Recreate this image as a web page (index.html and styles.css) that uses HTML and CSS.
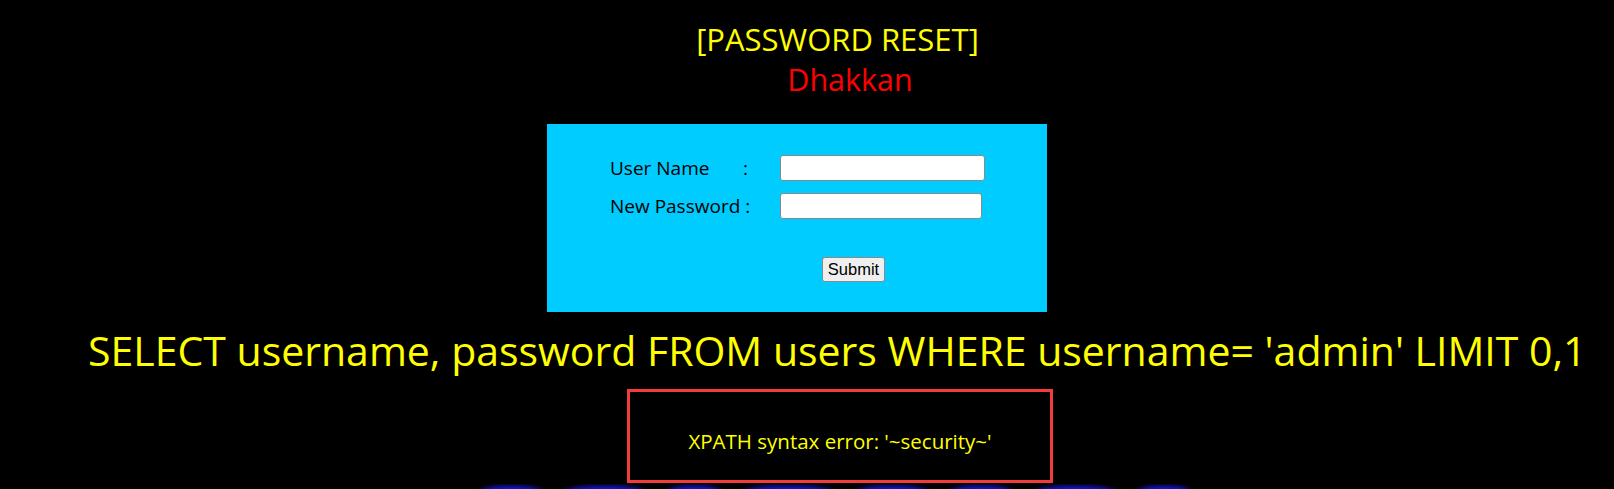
FILE: index.html
```html
<!DOCTYPE html>
<html>
<head>
<meta charset="utf-8">
<title>Less-17 Update Query- Error based - String</title>
<link rel="stylesheet" href="styles.css">
</head>
<body>
<div class="header">
  <div class="title">[PASSWORD RESET]</div>
  <div class="author">Dhakkan</div>
</div>
<div class="panel">
  <form class="form" action="" method="post">
    <div class="row">
      <span class="label"><span class="name">User Name</span><span class="colon">:</span></span>
      <input class="field field-user" type="text" name="uname" value="">
    </div>
    <div class="row">
      <span class="label">New Password :</span>
      <input class="field field-pass" type="text" name="passwd" value="">
    </div>
    <div class="submit-row">
      <input class="btn" type="submit" name="submit" value="Submit">
    </div>
  </form>
</div>
<div class="query">SELECT username, password FROM users WHERE username= 'admin' LIMIT 0,1</div>
<div class="error">XPATH syntax error: '~security~'</div>
<div class="banner">
  <span class="blob b1"></span>
  <span class="blob b2"></span>
  <span class="blob b3"></span>
  <span class="blob b4"></span>
  <span class="blob b5"></span>
  <span class="blob b6"></span>
  <span class="blob b7"></span>
  <span class="blob b8"></span>
</div>
</body>
</html>
```

FILE: styles.css
```css
html, body {
  margin: 0;
  padding: 0;
  background: #000;
  overflow: hidden;
}
body {
  font-family: "Open Sans", "Noto Sans", sans-serif;
  width: 1614px;
  height: 489px;
}
.header {
  padding-top: 19px;
  text-align: center;
  line-height: 40px;
}
.title {
  color: #ffff00;
  font-size: 31px;
  padding-left: 61px;
}
.author {
  color: #ff0000;
  font-size: 30.5px;
  padding-left: 86px;
}
.panel {
  margin: 25px 0 0 547px;
  width: 500px;
  height: 188px;
  background: #00ccff;
  box-sizing: border-box;
  padding: 25px 0 0 63px;
}
.form {
  margin: 0;
}
.row {
  display: flex;
  align-items: center;
  height: 38px;
  font-size: 19px;
  color: #000;
}
.label {
  width: 170px;
  display: flex;
  white-space: nowrap;
}
.name {
  width: 133px;
}
.field {
  box-sizing: border-box;
  height: 26px;
  border: 1px solid #8a8a8a;
  border-radius: 3px;
  background: #fff;
  padding: 0 3px;
  margin: 0;
}
.field-user { width: 205px; }
.field-pass { width: 202px; }
.submit-row {
  margin-top: 32px;
  padding-left: 212px;
}
.btn {
  box-sizing: border-box;
  height: 25px;
  width: 63px;
  padding: 0;
  margin: 0;
  border: 1px solid #8a8a8a;
  border-radius: 3px;
  background: #efefef;
  color: #000;
  font-family: "Liberation Sans", Arial, sans-serif;
  font-size: 16.5px;
}
.query {
  margin-top: 11px;
  padding-left: 88px;
  color: #ffff00;
  font-size: 41px;
  line-height: 55px;
  white-space: nowrap;
}
.error {
  margin: 11px 0 0 627px;
  width: 426px;
  height: 94px;
  box-sizing: border-box;
  border: 3px solid #f23c3c;
  padding-top: 35px;
  text-align: center;
  color: #ffff00;
  font-size: 20.5px;
  line-height: 28px;
  white-space: nowrap;
}
.banner {
  margin: 1px 0 0 476px;
  width: 720px;
  height: 5px;
  overflow: hidden;
  display: flex;
  gap: 14px;
  align-items: flex-start;
}
.blob {
  display: block;
  flex: none;
  height: 24px;
  margin-top: 2px;
  background: #1414d8;
  border-radius: 40% 40% 10% 10%;
  filter: blur(2px);
}
.b1 { width: 70px; }
.b2 { width: 90px; }
.b3 { width: 60px; }
.b4 { width: 100px; }
.b5 { width: 80px; }
.b6 { width: 70px; }
.b7 { width: 90px; }
.b8 { width: 60px; }
```
